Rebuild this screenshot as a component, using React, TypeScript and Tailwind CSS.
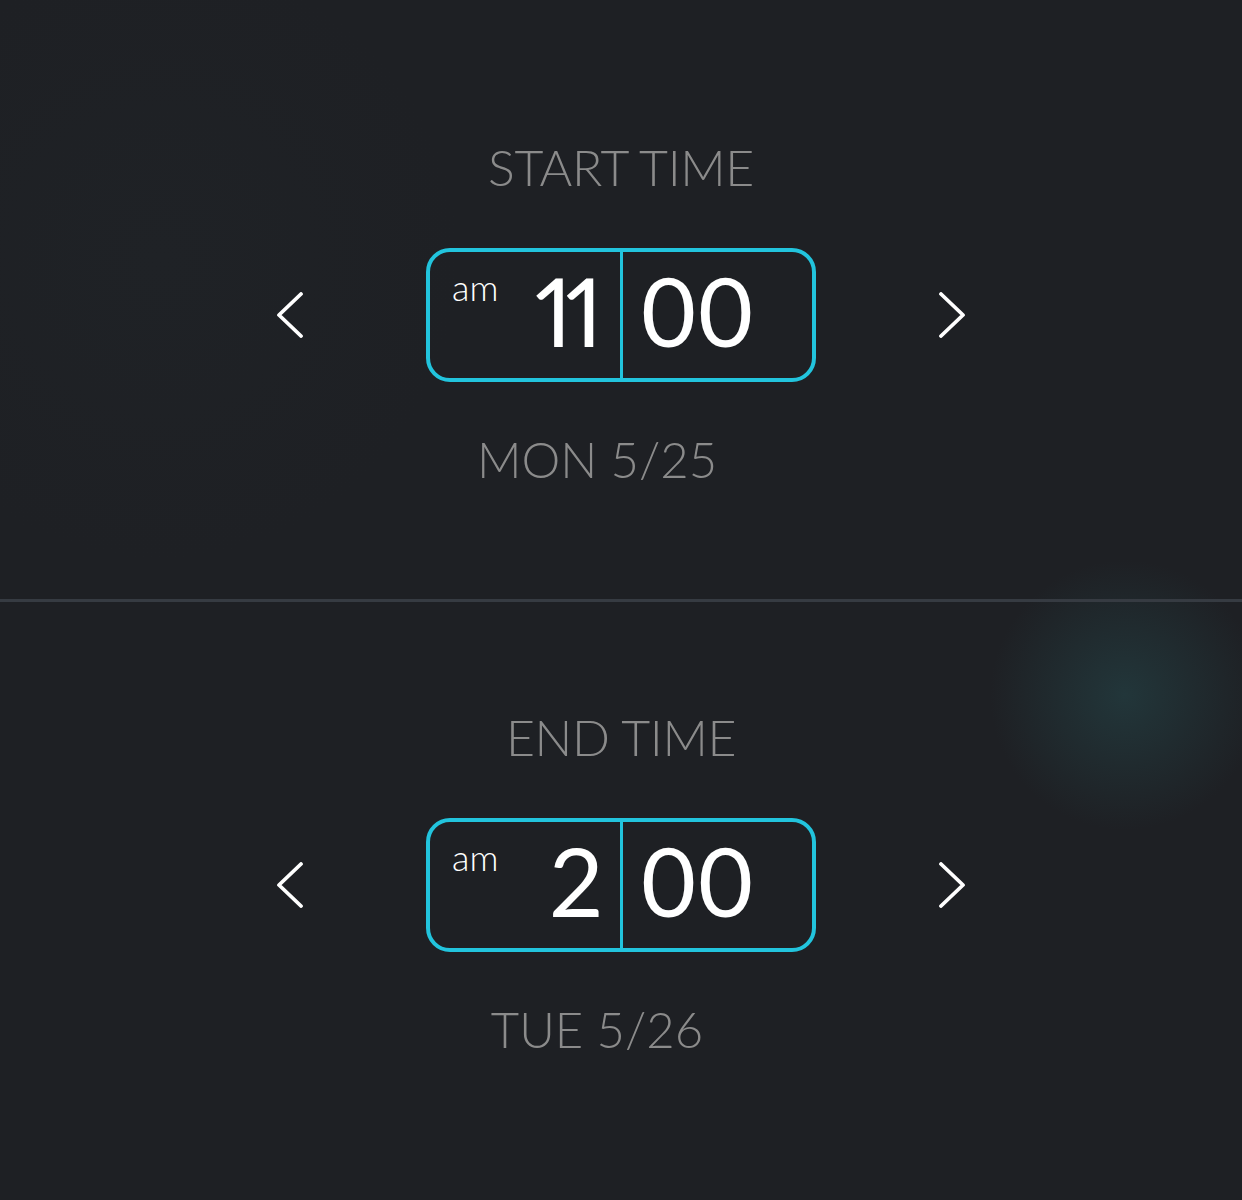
import React from "react";

type Slot = {
  label: string;
  hour: string;
  minute: string;
  meridiem: string;
  date: string;
};

const slots: Slot[] = [
  { label: "START TIME", hour: "11", minute: "00", meridiem: "am", date: "MON 5/25" },
  { label: "END TIME", hour: "2", minute: "00", meridiem: "am", date: "TUE 5/26" },
];

function Chevron({ dir }: { dir: "left" | "right" }) {
  return (
    <svg width="28" height="46" viewBox="0 0 28 46" fill="none" className="shrink-0">
      <path
        d={dir === "left" ? "M25 2 L3 23 L25 44" : "M3 2 L25 23 L3 44"}
        stroke="#ffffff"
        strokeWidth="3.8"
        strokeLinecap="round"
        strokeLinejoin="round"
      />
    </svg>
  );
}

function TimeBlock({ slot, top }: { slot: Slot; top: string }) {
  return (
    <section className={`flex flex-col items-center ${top}`}>
      <h2 className="text-[50px] leading-none font-light text-[#8b8b8b] tracking-[-0.4px]">
        {slot.label}
      </h2>

      <div className="mt-[56px] flex items-center gap-[122px]">
        <button className="cursor-pointer">
          <Chevron dir="left" />
        </button>

        <div className="flex h-[134px] w-[390px] rounded-[24px] border-4 border-[#22c4dd]">
          <div className="flex w-[190px] items-start justify-between pl-[22px] pr-[24px] pt-[11px]">
            <span className="mt-[6px] text-[36px] leading-none font-light text-white">
              {slot.meridiem}
            </span>
            <span className="text-[95px] leading-none text-white proportional-nums tracking-[-7px]">
              {slot.hour}
            </span>
          </div>
          <div className="w-[3px] bg-[#22c4dd]" />
          <div className="flex flex-1 items-start pl-[18px] pt-[11px]">
            <span className="text-[95px] leading-none text-white tracking-[2px]">{slot.minute}</span>
          </div>
        </div>

        <button className="cursor-pointer">
          <Chevron dir="right" />
        </button>
      </div>

      <p className="mt-[53px] mr-[48px] text-[49px] leading-none font-light text-[#8b8b8b]">
        {slot.date}
      </p>
    </section>
  );
}

export default function App() {
  return (
    <div
      className="h-[1200px] w-full overflow-hidden bg-[#1e2024] bg-[radial-gradient(circle_at_1125px_695px,#22363a_0,#21303400_135px),radial-gradient(circle_at_160px_260px,#1f2226_0,transparent_300px)]"
      style={{ fontFamily: "Lato, 'Open Sans', sans-serif" }}
    >
      <div className="h-[599px]">
        <TimeBlock slot={slots[0]} top="pt-[142px]" />
      </div>
      <div className="h-[3px] bg-[#363b42]" />
      <div className="h-[598px]">
        <TimeBlock slot={slots[1]} top="pt-[110px]" />
      </div>
    </div>
  );
}
